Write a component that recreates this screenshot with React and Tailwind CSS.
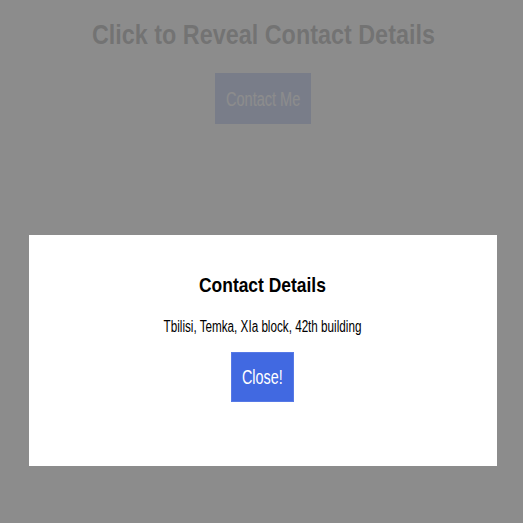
const App = () => {
  return (
    <div className="relative h-[523px] w-[523px] overflow-hidden bg-white font-['Liberation_Sans',Arial,sans-serif]">
      {/* page behind the modal */}
      <div className="flex flex-col items-center pt-[19px] pl-[3px]">
        <h1 className="whitespace-nowrap text-[28px] leading-[32px] font-bold text-black">
          <span className="inline-block scale-x-[0.835]">Click to Reveal Contact Details</span>
        </h1>
        <button className="mt-[22px] flex h-[51px] w-[96px] items-center justify-center bg-[#4169e1] text-[20px] text-white">
          <span className="inline-block scale-x-[0.725] whitespace-nowrap">Contact Me</span>
        </button>
      </div>

      {/* modal */}
      <div className="absolute inset-0 flex justify-center bg-[rgba(128,128,128,0.9)] pt-[235px] pl-[2px]">
        <div className="flex h-[231px] w-[468px] flex-col items-center bg-white pt-[38px]">
          <h2 className="whitespace-nowrap text-[21px] leading-[24px] font-bold text-black">
            <span className="inline-block scale-x-[0.83]">Contact Details</span>
          </h2>
          <p className="mt-[21px] whitespace-nowrap text-[16px] leading-[18px] text-black">
            <span className="inline-block scale-x-[0.73]">Tbilisi, Temka, XIa block, 42th building</span>
          </p>
          <button className="mt-[16px] flex h-[50px] w-[63px] items-center justify-center border border-[#5679e6] bg-[#4169e1] text-[20px] text-white">
            <span className="inline-block scale-x-[0.72]">Close!</span>
          </button>
        </div>
      </div>
    </div>
  );
};

export default App;
